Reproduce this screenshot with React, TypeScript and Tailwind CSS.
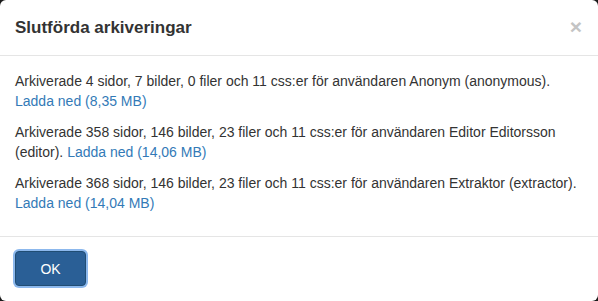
import React from "react";

const items = [
  { text: "Arkiverade 4 sidor, 7 bilder, 0 filer och 11 css:er för användaren Anonym (anonymous).", tail: "", size: "8,35 MB" },
  { text: "Arkiverade 358 sidor, 146 bilder, 23 filer och 11 css:er för användaren Editor Editorsson", tail: "(editor).", size: "14,06 MB" },
  { text: "Arkiverade 368 sidor, 146 bilder, 23 filer och 11 css:er för användaren Extraktor (extractor).", tail: "", size: "14,04 MB" },
];

export default function App() {
  return (
    <div className="w-[598px] h-[301px] bg-[#1a1a1a] font-['Liberation_Sans',Arial,sans-serif] text-[#333] text-[14px] leading-[20px]">
      <div className="w-full h-full bg-white rounded-[6px] flex flex-col overflow-hidden">
        <div className="flex items-center justify-between px-[15px] h-[56px] border-b border-[#e5e5e5]">
          <h4 className="text-[17px] leading-[26px] font-semibold text-[#333]">Slutförda arkiveringar</h4>
          <button className="text-[21px] font-bold leading-none text-[#c4c4c4] pr-[1px] -mt-[2px]">×</button>
        </div>
        <div className="px-[15px] pt-[15px] pb-[12px]">
          {items.map((it, i) => (
            <p key={i} className="mb-[11px]">
              {it.text}
              <br />
              {it.tail && <>{it.tail} </>}
              <a href="#" className="text-[#337ab7]">Ladda ned ({it.size})</a>
            </p>
          ))}
        </div>
        <div className="border-t border-[#e5e5e5] px-[15px] pt-[14px]">
          <button className="w-[71px] h-[35px] rounded-[4px] bg-[#2a5f96] border border-[#204d74] text-white text-[14px] ring-2 ring-[#5b9ae6]/70">
            OK
          </button>
        </div>
      </div>
    </div>
  );
}
